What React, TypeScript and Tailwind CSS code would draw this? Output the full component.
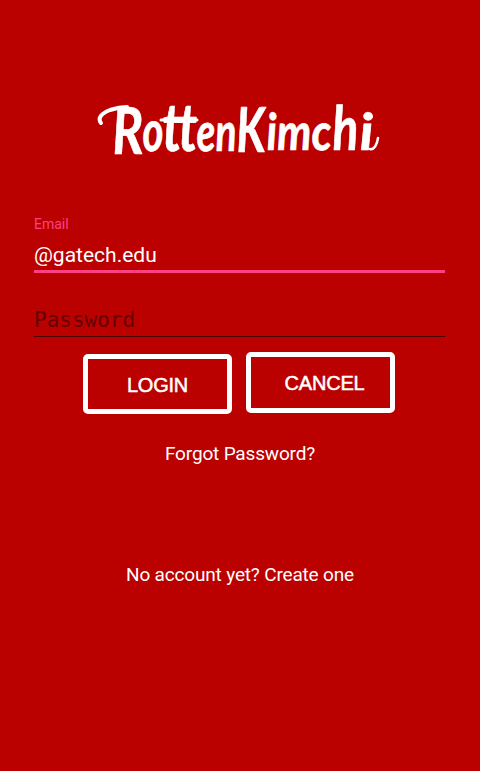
function Wordmark() {
  return (
    <svg
      className="mt-[80px] ml-[80px] block h-[90px] w-[320px] shrink-0 fill-white font-['Lato',sans-serif] font-bold italic"
      viewBox="80 80 320 90"
      role="img"
      aria-label="RottenKimchi"
    >
      <g transform="translate(-5.3 0) skewX(2)" stroke="white" strokeWidth="0.7" strokeLinejoin="round">
        <text x="113" y="154" fontSize="65" textLength="31" lengthAdjust="spacingAndGlyphs">R</text>
        <text x="143" y="151" fontSize="57" textLength="21" lengthAdjust="spacingAndGlyphs">o</text>
        <text x="163" y="151" fontSize="67" textLength="35" lengthAdjust="spacingAndGlyphs">tt</text>
        <text x="197" y="151" fontSize="54" textLength="40" lengthAdjust="spacingAndGlyphs">en</text>
        <text x="237" y="152" fontSize="62" textLength="29" lengthAdjust="spacingAndGlyphs">K</text>
        <text x="267" y="150" fontSize="51" textLength="45" lengthAdjust="spacingAndGlyphs">im</text>
        <text x="312" y="150" fontSize="51" textLength="20" lengthAdjust="spacingAndGlyphs">c</text>
        <text x="333" y="150" fontSize="61" textLength="26" lengthAdjust="spacingAndGlyphs">h</text>
        <text x="360" y="150" fontSize="51" textLength="14" lengthAdjust="spacingAndGlyphs">i</text>
      </g>
      <g fill="none" stroke="white" strokeLinecap="round" strokeLinejoin="round">
        <path d="M101 123C97 118 102 113 110 110C116 108 120 107 127 107" strokeWidth="4" />
        <path d="M161 120C172 119 182 123 197 120" strokeWidth="3" />
        <path d="M370 149C374 150 377 145 378 138" strokeWidth="2.5" />
      </g>
    </svg>
  );
}

export default function App() {
  return (
    <main className="flex h-[771px] w-[480px] flex-col overflow-hidden bg-[#bb0000] font-['Roboto',sans-serif] text-white">
      <Wordmark />
      <form className="flex flex-col" onSubmit={(e) => e.preventDefault()}>
        <div className="mr-[35px] ml-[34px] mt-[45px] flex h-[58px] flex-col border-b-[3px] border-[#ff4081]">
          <label htmlFor="email" className="text-[14px] leading-[18px] text-[#ff4081]">Email</label>
          <input
            id="email"
            defaultValue="@gatech.edu"
            className="mt-[8px] h-[28px] w-full bg-transparent text-[21px] leading-[28px] outline-none"
          />
        </div>
        <div className="mr-[35px] ml-[34px] mt-[34px] flex h-[30px] flex-col border-b border-[#4b0000]">
          <input
            aria-label="Password"
            type="password"
            placeholder="Password"
            className="h-[26px] w-full bg-transparent font-['DejaVu_Sans_Mono',monospace] text-[21px] leading-[26px] outline-none placeholder:text-[#660000]"
          />
        </div>
        <div className="ml-[83px] mt-[15px] flex gap-[14px] font-['Liberation_Sans',sans-serif] text-[20px] tracking-[-0.2px]">
          <button className="mt-[2px] h-[60px] w-[149px] rounded-[5px] border-[5px] border-white pt-[2px] [-webkit-text-stroke:0.5px_white]">
            LOGIN
          </button>
          <button className="h-[61px] w-[149px] rounded-[5px] border-[5px] border-white pl-[8px] [-webkit-text-stroke:0.5px_white]">
            CANCEL
          </button>
        </div>
      </form>
      <a className="mt-[26px] self-center text-[19px] leading-[28px] tracking-[-0.17px]">Forgot Password?</a>
      <a className="mt-[93px] self-center text-[19px] leading-[28px] tracking-[-0.17px]">No account yet? Create one</a>
    </main>
  );
}
